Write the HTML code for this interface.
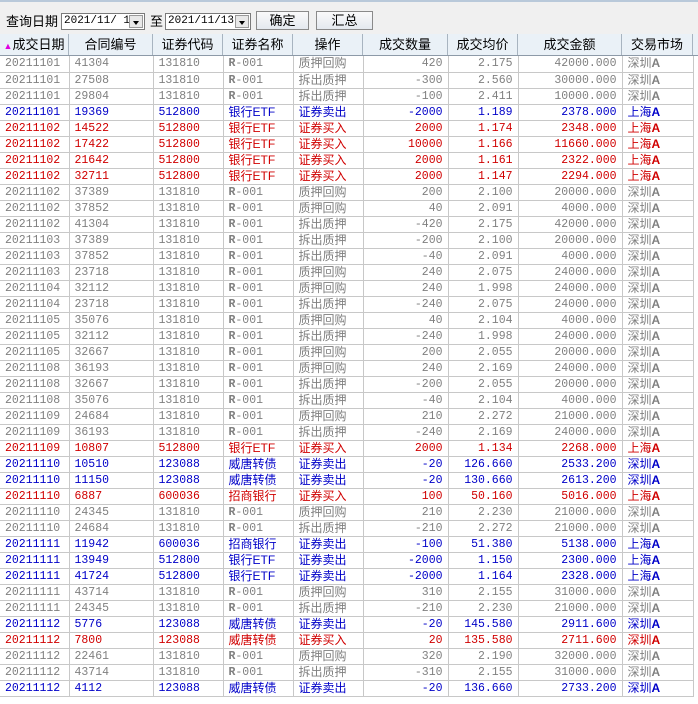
<!DOCTYPE html>
<html><head><meta charset="utf-8"><style>
*{margin:0;padding:0;box-sizing:border-box}
body{width:698px;height:704px;overflow:hidden;background:#fff;font-family:"Liberation Sans","Noto Sans CJK SC",sans-serif;position:relative}
.tb{position:absolute;left:0;top:0;width:698px;height:34px;background:#f0f0f0;border-top:2px solid #b9c9da}
.lbl{position:absolute;font-size:13px;top:9px}
.cb{position:absolute;top:11px;height:17px;background:#fff;border:1px solid #7a7a7a;font-family:"Liberation Mono",monospace;font-size:11px;line-height:15px;padding-left:2px;overflow:hidden;white-space:nowrap}
.cb i{position:absolute;right:1px;top:1px;width:14px;height:13px;background:#e8e8e8;border:1px solid #999}
.cb i:after{content:"";position:absolute;left:3px;top:5px;border:3px solid transparent;border-top:4px solid #000}
.bt{position:absolute;top:9px;height:19px;border:1px solid #8a8a8a;background:linear-gradient(#fafafa,#e4e9ef);font-size:13px;text-align:center;line-height:17px}
.hd{position:absolute;top:34px;left:0;height:22px;width:698px;background:#eaf1f7;border-bottom:1px solid #8d9aa8}
.hd div{position:absolute;top:0;height:21px;border-right:1px solid #a8b4c0;font-size:13px;text-align:center;line-height:22px}
table{position:absolute;top:56px;left:0;border-collapse:collapse;table-layout:fixed;width:693px}
td{height:16px;border-right:1px solid #c8c8c8;border-bottom:1px solid #c8c8c8;font-size:12px;line-height:15px;white-space:nowrap;overflow:hidden;padding:0 5px;font-weight:normal}
td.n{font-family:"Liberation Mono",monospace;font-size:11.5px}
td.r{text-align:right}
tr.g{color:#808080}tr.b{color:#0000c8}tr.d{color:#d00000}
b{font-weight:bold}
</style></head><body>
<div class="tb">
<div class="lbl" style="left:6px">查询日期</div>
<div class="cb" style="left:61px;width:84px">2021/11/ 1<i></i></div>
<div class="lbl" style="left:150px">至</div>
<div class="cb" style="left:165px;width:86px">2021/11/13<i></i></div>
<div class="bt" style="left:256px;width:53px">确定</div>
<div class="bt" style="left:316px;width:57px">汇总</div>
</div>
<div class="hd">
<div style="left:0;width:69px"><span style="color:#e000e0;font-size:9px">▲</span>成交日期</div>
<div style="left:69px;width:84px">合同编号</div>
<div style="left:153px;width:70px">证券代码</div>
<div style="left:223px;width:70px">证券名称</div>
<div style="left:293px;width:70px">操作</div>
<div style="left:363px;width:85px">成交数量</div>
<div style="left:448px;width:70px">成交均价</div>
<div style="left:518px;width:104px">成交金额</div>
<div style="left:622px;width:71px">交易市场</div>
</div>
<table>
<colgroup><col style="width:69px"><col style="width:84px"><col style="width:70px"><col style="width:70px"><col style="width:70px"><col style="width:85px"><col style="width:70px"><col style="width:104px"><col style="width:71px"></colgroup>
<tr class="g"><td class="n">20211101</td><td class="n">41304</td><td class="n">131810</td><td class="n"><b>R</b>-001</td><td>质押回购</td><td class="n r">420</td><td class="n r">2.175</td><td class="n r">42000.000</td><td>深圳<b>A</b></td></tr>
<tr class="g"><td class="n">20211101</td><td class="n">27508</td><td class="n">131810</td><td class="n"><b>R</b>-001</td><td>拆出质押</td><td class="n r">-300</td><td class="n r">2.560</td><td class="n r">30000.000</td><td>深圳<b>A</b></td></tr>
<tr class="g"><td class="n">20211101</td><td class="n">29804</td><td class="n">131810</td><td class="n"><b>R</b>-001</td><td>拆出质押</td><td class="n r">-100</td><td class="n r">2.411</td><td class="n r">10000.000</td><td>深圳<b>A</b></td></tr>
<tr class="b"><td class="n">20211101</td><td class="n">19369</td><td class="n">512800</td><td>银行ETF</td><td>证券卖出</td><td class="n r">-2000</td><td class="n r">1.189</td><td class="n r">2378.000</td><td>上海<b>A</b></td></tr>
<tr class="d"><td class="n">20211102</td><td class="n">14522</td><td class="n">512800</td><td>银行ETF</td><td>证券买入</td><td class="n r">2000</td><td class="n r">1.174</td><td class="n r">2348.000</td><td>上海<b>A</b></td></tr>
<tr class="d"><td class="n">20211102</td><td class="n">17422</td><td class="n">512800</td><td>银行ETF</td><td>证券买入</td><td class="n r">10000</td><td class="n r">1.166</td><td class="n r">11660.000</td><td>上海<b>A</b></td></tr>
<tr class="d"><td class="n">20211102</td><td class="n">21642</td><td class="n">512800</td><td>银行ETF</td><td>证券买入</td><td class="n r">2000</td><td class="n r">1.161</td><td class="n r">2322.000</td><td>上海<b>A</b></td></tr>
<tr class="d"><td class="n">20211102</td><td class="n">32711</td><td class="n">512800</td><td>银行ETF</td><td>证券买入</td><td class="n r">2000</td><td class="n r">1.147</td><td class="n r">2294.000</td><td>上海<b>A</b></td></tr>
<tr class="g"><td class="n">20211102</td><td class="n">37389</td><td class="n">131810</td><td class="n"><b>R</b>-001</td><td>质押回购</td><td class="n r">200</td><td class="n r">2.100</td><td class="n r">20000.000</td><td>深圳<b>A</b></td></tr>
<tr class="g"><td class="n">20211102</td><td class="n">37852</td><td class="n">131810</td><td class="n"><b>R</b>-001</td><td>质押回购</td><td class="n r">40</td><td class="n r">2.091</td><td class="n r">4000.000</td><td>深圳<b>A</b></td></tr>
<tr class="g"><td class="n">20211102</td><td class="n">41304</td><td class="n">131810</td><td class="n"><b>R</b>-001</td><td>拆出质押</td><td class="n r">-420</td><td class="n r">2.175</td><td class="n r">42000.000</td><td>深圳<b>A</b></td></tr>
<tr class="g"><td class="n">20211103</td><td class="n">37389</td><td class="n">131810</td><td class="n"><b>R</b>-001</td><td>拆出质押</td><td class="n r">-200</td><td class="n r">2.100</td><td class="n r">20000.000</td><td>深圳<b>A</b></td></tr>
<tr class="g"><td class="n">20211103</td><td class="n">37852</td><td class="n">131810</td><td class="n"><b>R</b>-001</td><td>拆出质押</td><td class="n r">-40</td><td class="n r">2.091</td><td class="n r">4000.000</td><td>深圳<b>A</b></td></tr>
<tr class="g"><td class="n">20211103</td><td class="n">23718</td><td class="n">131810</td><td class="n"><b>R</b>-001</td><td>质押回购</td><td class="n r">240</td><td class="n r">2.075</td><td class="n r">24000.000</td><td>深圳<b>A</b></td></tr>
<tr class="g"><td class="n">20211104</td><td class="n">32112</td><td class="n">131810</td><td class="n"><b>R</b>-001</td><td>质押回购</td><td class="n r">240</td><td class="n r">1.998</td><td class="n r">24000.000</td><td>深圳<b>A</b></td></tr>
<tr class="g"><td class="n">20211104</td><td class="n">23718</td><td class="n">131810</td><td class="n"><b>R</b>-001</td><td>拆出质押</td><td class="n r">-240</td><td class="n r">2.075</td><td class="n r">24000.000</td><td>深圳<b>A</b></td></tr>
<tr class="g"><td class="n">20211105</td><td class="n">35076</td><td class="n">131810</td><td class="n"><b>R</b>-001</td><td>质押回购</td><td class="n r">40</td><td class="n r">2.104</td><td class="n r">4000.000</td><td>深圳<b>A</b></td></tr>
<tr class="g"><td class="n">20211105</td><td class="n">32112</td><td class="n">131810</td><td class="n"><b>R</b>-001</td><td>拆出质押</td><td class="n r">-240</td><td class="n r">1.998</td><td class="n r">24000.000</td><td>深圳<b>A</b></td></tr>
<tr class="g"><td class="n">20211105</td><td class="n">32667</td><td class="n">131810</td><td class="n"><b>R</b>-001</td><td>质押回购</td><td class="n r">200</td><td class="n r">2.055</td><td class="n r">20000.000</td><td>深圳<b>A</b></td></tr>
<tr class="g"><td class="n">20211108</td><td class="n">36193</td><td class="n">131810</td><td class="n"><b>R</b>-001</td><td>质押回购</td><td class="n r">240</td><td class="n r">2.169</td><td class="n r">24000.000</td><td>深圳<b>A</b></td></tr>
<tr class="g"><td class="n">20211108</td><td class="n">32667</td><td class="n">131810</td><td class="n"><b>R</b>-001</td><td>拆出质押</td><td class="n r">-200</td><td class="n r">2.055</td><td class="n r">20000.000</td><td>深圳<b>A</b></td></tr>
<tr class="g"><td class="n">20211108</td><td class="n">35076</td><td class="n">131810</td><td class="n"><b>R</b>-001</td><td>拆出质押</td><td class="n r">-40</td><td class="n r">2.104</td><td class="n r">4000.000</td><td>深圳<b>A</b></td></tr>
<tr class="g"><td class="n">20211109</td><td class="n">24684</td><td class="n">131810</td><td class="n"><b>R</b>-001</td><td>质押回购</td><td class="n r">210</td><td class="n r">2.272</td><td class="n r">21000.000</td><td>深圳<b>A</b></td></tr>
<tr class="g"><td class="n">20211109</td><td class="n">36193</td><td class="n">131810</td><td class="n"><b>R</b>-001</td><td>拆出质押</td><td class="n r">-240</td><td class="n r">2.169</td><td class="n r">24000.000</td><td>深圳<b>A</b></td></tr>
<tr class="d"><td class="n">20211109</td><td class="n">10807</td><td class="n">512800</td><td>银行ETF</td><td>证券买入</td><td class="n r">2000</td><td class="n r">1.134</td><td class="n r">2268.000</td><td>上海<b>A</b></td></tr>
<tr class="b"><td class="n">20211110</td><td class="n">10510</td><td class="n">123088</td><td>威唐转债</td><td>证券卖出</td><td class="n r">-20</td><td class="n r">126.660</td><td class="n r">2533.200</td><td>深圳<b>A</b></td></tr>
<tr class="b"><td class="n">20211110</td><td class="n">11150</td><td class="n">123088</td><td>威唐转债</td><td>证券卖出</td><td class="n r">-20</td><td class="n r">130.660</td><td class="n r">2613.200</td><td>深圳<b>A</b></td></tr>
<tr class="d"><td class="n">20211110</td><td class="n">6887</td><td class="n">600036</td><td>招商银行</td><td>证券买入</td><td class="n r">100</td><td class="n r">50.160</td><td class="n r">5016.000</td><td>上海<b>A</b></td></tr>
<tr class="g"><td class="n">20211110</td><td class="n">24345</td><td class="n">131810</td><td class="n"><b>R</b>-001</td><td>质押回购</td><td class="n r">210</td><td class="n r">2.230</td><td class="n r">21000.000</td><td>深圳<b>A</b></td></tr>
<tr class="g"><td class="n">20211110</td><td class="n">24684</td><td class="n">131810</td><td class="n"><b>R</b>-001</td><td>拆出质押</td><td class="n r">-210</td><td class="n r">2.272</td><td class="n r">21000.000</td><td>深圳<b>A</b></td></tr>
<tr class="b"><td class="n">20211111</td><td class="n">11942</td><td class="n">600036</td><td>招商银行</td><td>证券卖出</td><td class="n r">-100</td><td class="n r">51.380</td><td class="n r">5138.000</td><td>上海<b>A</b></td></tr>
<tr class="b"><td class="n">20211111</td><td class="n">13949</td><td class="n">512800</td><td>银行ETF</td><td>证券卖出</td><td class="n r">-2000</td><td class="n r">1.150</td><td class="n r">2300.000</td><td>上海<b>A</b></td></tr>
<tr class="b"><td class="n">20211111</td><td class="n">41724</td><td class="n">512800</td><td>银行ETF</td><td>证券卖出</td><td class="n r">-2000</td><td class="n r">1.164</td><td class="n r">2328.000</td><td>上海<b>A</b></td></tr>
<tr class="g"><td class="n">20211111</td><td class="n">43714</td><td class="n">131810</td><td class="n"><b>R</b>-001</td><td>质押回购</td><td class="n r">310</td><td class="n r">2.155</td><td class="n r">31000.000</td><td>深圳<b>A</b></td></tr>
<tr class="g"><td class="n">20211111</td><td class="n">24345</td><td class="n">131810</td><td class="n"><b>R</b>-001</td><td>拆出质押</td><td class="n r">-210</td><td class="n r">2.230</td><td class="n r">21000.000</td><td>深圳<b>A</b></td></tr>
<tr class="b"><td class="n">20211112</td><td class="n">5776</td><td class="n">123088</td><td>威唐转债</td><td>证券卖出</td><td class="n r">-20</td><td class="n r">145.580</td><td class="n r">2911.600</td><td>深圳<b>A</b></td></tr>
<tr class="d"><td class="n">20211112</td><td class="n">7800</td><td class="n">123088</td><td>威唐转债</td><td>证券买入</td><td class="n r">20</td><td class="n r">135.580</td><td class="n r">2711.600</td><td>深圳<b>A</b></td></tr>
<tr class="g"><td class="n">20211112</td><td class="n">22461</td><td class="n">131810</td><td class="n"><b>R</b>-001</td><td>质押回购</td><td class="n r">320</td><td class="n r">2.190</td><td class="n r">32000.000</td><td>深圳<b>A</b></td></tr>
<tr class="g"><td class="n">20211112</td><td class="n">43714</td><td class="n">131810</td><td class="n"><b>R</b>-001</td><td>拆出质押</td><td class="n r">-310</td><td class="n r">2.155</td><td class="n r">31000.000</td><td>深圳<b>A</b></td></tr>
<tr class="b"><td class="n">20211112</td><td class="n">4112</td><td class="n">123088</td><td>威唐转债</td><td>证券卖出</td><td class="n r">-20</td><td class="n r">136.660</td><td class="n r">2733.200</td><td>深圳<b>A</b></td></tr>
</table>
</body></html>
